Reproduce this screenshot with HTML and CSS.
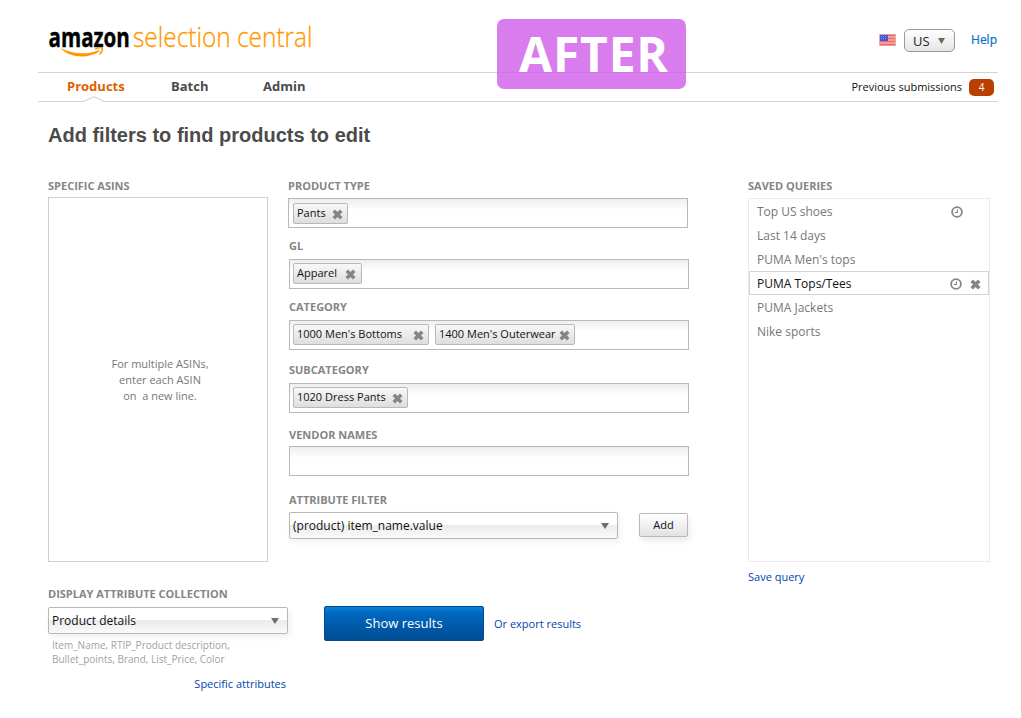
FILE: index.html
```html
<!DOCTYPE html>
<html lang="en">
<head>
<meta charset="utf-8">
<title>Amazon Selection Central</title>
<link rel="stylesheet" href="styles.css">
</head>
<body>
<svg class="defs" width="0" height="0" aria-hidden="true">
  <symbol id="x" viewBox="0 0 10 10"><path d="M1.6 1.6 8.4 8.4M8.4 1.6 1.6 8.4" stroke="#858585" stroke-width="3.2" fill="none"/></symbol>
  <symbol id="clock" viewBox="0 0 12 12"><circle cx="6" cy="6" r="4.9" fill="none" stroke="#858585" stroke-width="1.8"/><path d="M6.4 3.2V6.5H3.8" fill="none" stroke="#858585" stroke-width="1.1"/></symbol>
  <symbol id="down" viewBox="0 0 8 6"><path d="M0 0H8L4 6Z" fill="#707070"/></symbol>
</svg>
<div class="page">
  <header class="top">
    <svg class="logo" width="270" height="40" viewBox="46 20 270 40">
      <text class="logo-brand" transform="translate(48.5 46.5) scale(.79 1)" textLength="103" lengthAdjust="spacingAndGlyphs">amazon</text>
      <text class="logo-name" transform="translate(133 47) scale(.9 1)" textLength="199.5" lengthAdjust="spacingAndGlyphs">selection central</text>
      <path d="M60.5 48C70 58.5 89 59 100 51L99 50C88 55 73 54.5 60.5 48Z" fill="#f90"/>
      <path d="M95 49.2C98 47.6 101 47.4 102.3 48C102.6 50.5 101.2 53 99.5 54.6" fill="none" stroke="#f90" stroke-width="1.4"/>
    </svg>
    <div class="locale">
      <svg class="flag" width="17" height="12" viewBox="0 0 17 12">
        <rect x=".5" y=".5" width="16" height="11" fill="#f7b0a6"/>
        <path d="M1 1.5H16M1 4.5H16M1 7.5H16M1 10.5H16" stroke="#ee6a5c" stroke-width="1.5"/>
        <rect x="1" y="1" width="8" height="6" fill="#4258dc"/>
        <path d="M2 2.5H8M2 4.5H8" stroke="#7f8eee" stroke-dasharray="1 1"/>
        <rect x=".5" y=".5" width="16" height="11" fill="none" stroke="#b98a94" stroke-opacity=".5"/>
      </svg>
      <button class="country">US <svg width="7" height="6" viewBox="0 0 8 6" preserveAspectRatio="none"><path d="M0 0H8L4 6Z" fill="#666"/></svg></button>
      <a class="help">Help</a>
    </div>
  </header>
  <div class="after">AFTER</div>
  <nav class="nav">
    <a class="tab tab-on">Products<svg class="notch" width="24" height="6" viewBox="0 0 24 6"><path d="M1 6 12 .7 23 6Z" fill="#fff"/><path d="M0 5.5H1.5L12 .7 22.5 5.5H24" fill="none" stroke="#ccc"/></svg></a>
    <a class="tab tab-batch">Batch</a>
    <a class="tab tab-admin">Admin</a>
    <span class="previous">Previous submissions</span>
    <span class="count">4</span>
  </nav>
  <h1 class="title">Add filters to find products to edit</h1>
  <main class="columns">
    <section class="asins">
      <h2 class="label">SPECIFIC ASINS</h2>
      <div class="asin-box"><p>For multiple ASINs,<br>enter each ASIN<br>on &nbsp;a new line.</p></div>
    </section>
    <section class="filters">
      <div class="field field-type"><h2 class="label">PRODUCT TYPE</h2><div class="box"><span class="chip chip-pants">Pants<svg class="ic"><use href="#x"/></svg></span></div></div>
      <div class="field field-gl"><h2 class="label">GL</h2><div class="box"><span class="chip chip-apparel">Apparel<svg class="ic"><use href="#x"/></svg></span></div></div>
      <div class="field field-cat"><h2 class="label">CATEGORY</h2><div class="box"><span class="chip chip-bottoms">1000 Men's Bottoms<svg class="ic"><use href="#x"/></svg></span><span class="chip chip-outer">1400 Men's Outerwear<svg class="ic"><use href="#x"/></svg></span></div></div>
      <div class="field field-sub"><h2 class="label">SUBCATEGORY</h2><div class="box"><span class="chip chip-dress">1020 Dress Pants<svg class="ic"><use href="#x"/></svg></span></div></div>
      <div class="field field-vendor"><h2 class="label">VENDOR NAMES</h2><div class="box"></div></div>
      <div class="field field-attr"><h2 class="label">ATTRIBUTE FILTER</h2>
        <div class="attr-row"><div class="select select-attr"><span class="item-name">(product) item_name.value</span><svg class="arrow" width="8" height="6"><use href="#down"/></svg></div><button class="add">Add</button></div></div>
    </section>
    <section class="saved">
      <h2 class="label">SAVED QUERIES</h2>
      <ul class="queries">
        <li>Top US shoes<svg class="clock"><use href="#clock"/></svg></li>
        <li>Last 14 days</li>
        <li>PUMA Men's tops</li>
        <li class="picked">PUMA Tops/Tees<svg class="clock"><use href="#clock"/></svg><svg class="ic"><use href="#x"/></svg></li>
        <li>PUMA Jackets</li>
        <li>Nike sports</li>
      </ul>
      <a class="link save">Save query</a>
    </section>
  </main>
  <footer class="bottom">
    <section class="collection">
      <h2 class="label">DISPLAY ATTRIBUTE COLLECTION</h2>
      <div class="select select-details"><span>Product details</span><svg class="arrow" width="8" height="6"><use href="#down"/></svg></div>
      <p class="hint">Item_Name, RTIP_Product description,<br>Bullet_points, Brand, List_Price, Color</p>
      <a class="link specific">Specific attributes</a>
    </section>
    <button class="show">Show results</button>
    <a class="link export">Or export results</a>
  </footer>
</div>
</body>
</html>
```
FILE: styles.css
```css
* { box-sizing: border-box; }
body { margin: 0; background: #fff; font: 11px/16px "Open Sans", sans-serif; color: #111; }
button { font-family: inherit; padding: 0; color: #111; }
h1, h2, p, ul { margin: 0; padding: 0; }
.defs { position: absolute; }
.page { position: relative; width: 1021px; height: 718px; overflow: hidden; }
.top { height: 72px; padding: 20px 24px 0 46px; display: flex; justify-content: space-between; }
.logo { overflow: visible; }
.logo-brand { font: 700 26.5px "Open Sans", sans-serif; fill: #000; stroke: #000; stroke-width: .4px; }
.logo-name { font: 300 28px "Open Sans", sans-serif; fill: #f90; stroke: #f90; stroke-width: .3px; }
.locale { display: flex; align-items: center; height: 40px; }
.flag { margin-right: 8px; }
.country { width: 51px; height: 23px; border: 1px solid #999; border-radius: 5px; background: linear-gradient(#fff, #e5e5e5); font-size: 13px; line-height: 20px; display: flex; align-items: center; padding: 2px 9px 0 8px; justify-content: space-between; color: #222; }
.help { margin-left: 16px; font-size: 12px; color: #0070c9; -webkit-text-stroke: .2px; }
.after { position: absolute; left: 497px; top: 19px; width: 189px; height: 70px; border-radius: 7px; background: rgba(207, 91, 233, .8); color: #fff; font: 700 48px/70px "Open Sans", sans-serif; padding-left: 22px; letter-spacing: .8px; }
.nav { height: 30px; margin: 0 23px 0 38px; border-top: 1px solid #d4d4d4; border-bottom: 1px solid #d4d4d4; display: flex; align-items: center; color: #4b4b4b; }
.tab { font-weight: 700; font-size: 13px; position: relative; margin-bottom: 2px; }
.tab-on { color: #e06000; margin-left: 29px; width: 104px; }
.notch { position: absolute; left: 15px; top: 18px; }
.tab-batch { width: 92px; }
.previous { margin-left: auto; font-size: 11px; color: #111; }
.count { width: 25px; height: 17px; border-radius: 5px; background: #b94000; color: #fff; font-size: 10px; line-height: 16px; text-align: center; margin: 0 4px 0 7px; }
.title { font: 700 20px/24px "Liberation Sans", sans-serif; color: #4b4b4b; margin: 21px 0 0 48px; }
.columns { display: flex; padding: 31px 31px 0 48px; height: 439px; }
.label { font-size: 11px; line-height: 16px; font-weight: 700; color: #858585; white-space: nowrap; }
.asins { width: 220px; }
.asin-box { height: 365px; margin-top: 3px; border: 1px solid #d0d0d0; display: flex; align-items: center; justify-content: center; text-align: center; color: #777; padding-left: 4px; }
.filters { width: 401px; margin-left: 20px; }
.field { padding-left: 1px; }
.field-type { padding-left: 0; }
.box { width: 400px; height: 30px; margin-top: 5px; border: 1px solid #b8b8b8; background: linear-gradient(#eee, #fff 11px); padding: 3px 0 0 3px; display: flex; gap: 6px; }
.field-type .box { margin-top: 4px; padding: 4px 0 0 4px; }
.field-gl { margin-top: 10px; }
.field-cat { margin-top: 10px; }
.field-sub { margin-top: 12px; }
.field-vendor { margin-top: 14px; }
.field-vendor .box { margin-top: 3px; }
.field-attr { margin-top: 16px; }
.chip { height: 21px; border: 1px solid #b8b8b8; border-radius: 2px; background: linear-gradient(#f8f8f8, #dedede); display: flex; justify-content: space-between; line-height: 18px; padding: 0 4px 0 3px; white-space: nowrap; }
.ic { width: 11px; height: 11px; flex: none; margin-top: 5px; }
.chip-pants { width: 55px; }
.chip-apparel { width: 69px; padding-right: 5px; }
.chip-bottoms { width: 136px; }
.chip-outer { width: 140px; }
.chip-dress { width: 115px; }
.attr-row { display: flex; justify-content: space-between; width: 399px; margin-top: 4px; }
.select { height: 27px; border: 1px solid #b8b8b8; border-radius: 2px; background: linear-gradient(#fff 49%, #ebebeb 50%, #fafafa); font-size: 12px; display: flex; justify-content: space-between; align-items: center; padding: 0 8px 0 3px; box-shadow: 2px 3px 6px rgba(0, 0, 0, .06); }
.arrow { width: 8px; height: 6px; }
.select-attr { width: 329px; }
.add { width: 49px; height: 24px; margin-top: 1px; padding-bottom: 2px; border: 1px solid #b8b8b8; border-radius: 2px; background: linear-gradient(#fff, #e2e2e2); font-size: 11px; box-shadow: 2px 4px 6px rgba(0, 0, 0, .08); }
.saved { width: 242px; margin-left: 59px; }
.queries { list-style: none; height: 364px; margin-top: 4px; border: 1px solid #ebebeb; font-size: 12px; color: #777; }
.queries li { height: 24px; line-height: 24px; border: 1px solid transparent; padding: 2px 7px 0; display: flex; align-items: center; }
.queries .clock { width: 12px; height: 12px; margin-left: auto; margin-right: 18px; }
.queries .picked { border-color: #d4d4d4; color: #111; }
.queries .picked .clock { margin-right: 8px; }
.queries .ic { margin-top: 1px; }
.link { color: #0046ad; }
.save { display: block; margin-top: 7px; }
.bottom { display: flex; padding-left: 48px; }
.collection { width: 240px; }
.select-details { margin-top: 5px; }
.hint { font-size: 10px; line-height: 14px; color: #a2a2a2; margin: 4px 0 0 4px; white-space: nowrap; }
.specific { display: block; text-align: right; margin: 10px 2px 0 0; }
.show { width: 160px; height: 35px; margin: 20px 0 0 36px; padding-bottom: 2px; border: 1px solid #004b91; border-radius: 2px; background: linear-gradient(#0a7fd4, #0067c0 20%, #004d92); color: #fff; font-size: 13px; }
.export { margin: 30px 0 0 10px; }
```
